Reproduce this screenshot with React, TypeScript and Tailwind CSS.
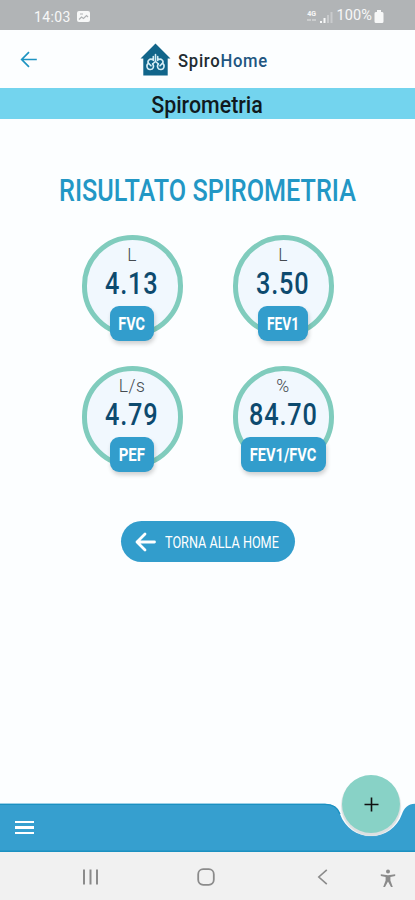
/**
 * SpirometryResult
 *
 * Result screen of a spirometry test, with the four measured values.
 */

import { clsx } from 'clsx';

interface Measurement {
  label: string;
  unit: string;
  value: string;
  badgeClass: string;
  labelClass: string;
}

const measurements: Measurement[] = [
  {
    label: 'FVC',
    unit: 'L',
    value: '4.13',
    badgeClass: 'w-[44px]',
    labelClass: 'scale-x-[0.80]',
  },
  {
    label: 'FEV1',
    unit: 'L',
    value: '3.50',
    badgeClass: 'w-[50px]',
    labelClass: 'scale-x-[0.76]',
  },
  {
    label: 'PEF',
    unit: 'L/s',
    value: '4.79',
    badgeClass: 'w-[44px]',
    labelClass: 'scale-x-[0.83]',
  },
  {
    label: 'FEV1/FVC',
    unit: '%',
    value: '84.70',
    badgeClass: 'w-[85px]',
    labelClass: 'scale-x-[0.81]',
  },
];

function StatusBar() {
  return (
    <div className="flex h-[30px] items-center justify-between bg-[#b1b4b6] pt-[3px] pr-[31px] pl-[34px] text-white/90">
      <div className="flex items-center gap-[6px]">
        <span className="text-[14px] leading-none tracking-[0.4px]">14:03</span>
        <svg className="h-[13px] w-[13px]" viewBox="0 0 13 13" aria-hidden="true">
          <rect x="0" y="1" width="13" height="11" rx="2" fill="currentColor" />
          <path d="M2 9.5L4.5 7l2 1.5L9.5 5.5 11 7M3 4h3" fill="none" stroke="#b1b4b6" strokeWidth="1.2" />
        </svg>
      </div>
      <div className="flex items-center">
        <div className="flex w-[10px] flex-col items-center">
          <span className="text-[7px] leading-[7px] font-bold">4G</span>
          <svg className="h-[4px] w-[9px] opacity-50" viewBox="0 0 9 4" aria-hidden="true">
            <path d="M0 2h4M5 2h4" stroke="currentColor" strokeWidth="1.5" />
          </svg>
        </div>
        <svg className="ml-[3px] h-[12px] w-[13px]" viewBox="0 0 13 12" aria-hidden="true">
          <path d="M1 12v-2M4.5 12V7" stroke="currentColor" strokeWidth="2" />
          <path d="M8 12V4M11.5 12V1" stroke="currentColor" strokeWidth="2" opacity="0.35" />
        </svg>
        <span className="ml-[4px] text-[14.5px] leading-none tracking-[0.1px]">100%</span>
        <svg className="ml-[2px] h-[13px] w-[10px]" viewBox="0 0 10 13" aria-hidden="true">
          <path d="M3 0h4v2h1.2Q9.5 2 9.5 3.5V11.5Q9.5 13 8 13H2Q.5 13 .5 11.5V3.5Q.5 2 1.8 2H3z" fill="currentColor" />
        </svg>
      </div>
    </div>
  );
}

function Logo() {
  return (
    <div className="flex items-center">
      <svg className="h-[33px] w-[31px]" viewBox="0 0 31 33" aria-hidden="true">
        <path d="M15.5 0.5L30.5 15.5H27.7V32.5H3.3V15.5H.5z" fill="#11658a" />
        <g fill="none" stroke="#d5edf5" strokeWidth="1.6" strokeLinecap="round">
          <path d="M15.5 11.5V18.5L12.5 21M15.5 18.5L18.500 21" />
          <path d="M13.3 13.5V17C9.500 14.500 7 18.500 8.500 20.300C5.800 22 6.800 26.800 10.300 26.500C13.300 26.500 14.300 23.500 12.800 21" />
          <path d="M17.700 13.500V17C21.500 14.500 24 18.500 22.500 20.300C25.200 22 24.200 26.800 20.700 26.500C17.700 26.500 16.700 23.500 18.200 21" />
          <path d="M8.500 20.300L11 22.800M22.500 20.300L20 22.800" />
        </g>
      </svg>
      <span className="mt-[4px] ml-[7px] origin-left scale-x-[0.90] text-[18.5px] leading-none font-medium tracking-[0.8px] text-[#222c32]">
        Spiro<span className="text-[#225681]">Home</span>
      </span>
    </div>
  );
}

function Header() {
  return (
    <header className="flex h-[58px] items-center pl-[20px]">
      <button className="h-[18px] w-[18px]" aria-label="Indietro">
        <svg className="h-[18px] w-[18px]" viewBox="0 0 18 18" fill="none" stroke="#1e94c2" strokeWidth="1.7" aria-hidden="true">
          <path d="M16.8 9.5H2M9 2.2L1.7 9.5L9 16.8" />
        </svg>
      </button>
      <div className="ml-[102px]">
        <Logo />
      </div>
    </header>
  );
}

function ResultCircle({ item }: { item: Measurement }) {
  return (
    <div className="flex w-[101px] flex-col items-center">
      <div className="flex h-[102px] w-[101px] flex-col items-center rounded-full border-[5px] border-[#80ccbd] bg-[#f1f8fe] pt-[5px]">
        <span className="text-[17.5px] leading-[20px] font-light tracking-[0.5px] text-[#454b50]">{item.unit}</span>
        <span className="mt-px scale-x-[0.79] text-[32px] leading-[34px] font-medium tracking-[1px] text-[#0d4a6e]">
          {item.value}
        </span>
      </div>
      <div
        className={clsx(
          'relative -mt-[31px] flex h-[35px] items-center justify-center rounded-[9px] bg-[#329dcc] shadow-[1px_3px_4px_rgba(0,0,0,0.18)]',
          item.badgeClass
        )}
      >
        <span className={clsx('text-[18px] leading-none font-bold whitespace-nowrap text-white', item.labelClass)}>
          {item.label}
        </span>
      </div>
    </div>
  );
}

function BottomBar() {
  return (
    <div className="relative h-[49px]">
      <svg className="block h-[49px] w-[415px]" viewBox="0 0 415 49" aria-hidden="true">
        <path
          d="M0 .7H325C334 .7 338 5 340 11C345 25 357 33 371 33C385 33 397 25 402 11C404 5 408 .7 415 .7V49H0z"
          fill="#369fcf"
        />
        <path d="M0 1.4H325C334 1.4 338 5 340 11M0 48.3H415" fill="none" stroke="#1b91c1" strokeWidth="1.4" />
      </svg>
      <button className="absolute top-[18px] left-[15px] flex w-[19px] flex-col gap-[3px]" aria-label="Menu">
        <span className="h-[2.4px] w-full bg-white" />
        <span className="h-[2.4px] w-full bg-white" />
        <span className="h-[2.4px] w-full bg-white" />
      </button>
      <button
        className="absolute -top-[28px] left-[342px] flex h-[58px] w-[58px] items-center justify-center rounded-full bg-[#88d2c6] shadow-[0_2px_1px_1px_#dce0e1]"
        aria-label="Aggiungi"
      >
        <svg className="h-[15px] w-[15px]" viewBox="0 0 15 15" stroke="#111" strokeWidth="1.6" aria-hidden="true">
          <path d="M7.5 .5V14.500M.5 7.500H14.500" />
        </svg>
      </button>
    </div>
  );
}

function SystemNav() {
  return (
    <nav className="flex h-[48px] items-center bg-[#f1f1f1] pt-[2px] pl-[82px] text-[#8b8b8b]">
      <svg className="h-[16px] w-[17px]" viewBox="0 0 17 16" stroke="currentColor" strokeWidth="2" aria-hidden="true">
        <path d="M2 .5V15.5M8.5 .5V15.5M15 .5V15.5" />
      </svg>
      <svg className="ml-[98px] h-[18px] w-[18px]" viewBox="0 0 18 18" fill="none" stroke="currentColor" strokeWidth="1.8" aria-hidden="true">
        <rect x="1.2" y="1.2" width="15.6" height="15.6" rx="5" />
      </svg>
      <svg className="ml-[102px] h-[16px] w-[11px]" viewBox="0 0 11 16" fill="none" stroke="currentColor" strokeWidth="1.6" aria-hidden="true">
        <path d="M9.8 .8L1.8 8L9.8 15.2" />
      </svg>
      <svg className="mt-[2px] ml-[52px] h-[19px] w-[16px]" viewBox="0 0 16 19" fill="currentColor" aria-hidden="true">
        <circle cx="8" cy="2.5" r="2" />
        <path d="M.8 5.3L8 6.2L15.2 5.3V7L10.4 8V11.5L12.8 18H11L8 12.5L5 18H3.2L5.6 11.5V8L.8 7z" />
      </svg>
    </nav>
  );
}

export default function App() {
  return (
    <div className="flex h-[900px] w-[415px] flex-col overflow-hidden bg-[#fcfeff] font-['Roboto','Liberation_Sans',sans-serif]">
      <StatusBar />
      <Header />
      <div className="flex h-[31px] items-center justify-center bg-[#73d4ee] pt-[3px]">
        <h1 className="scale-x-[0.93] text-[23px] leading-none font-medium text-[#10191d]">Spirometria</h1>
      </div>

      <main className="flex flex-1 flex-col items-center">
        <h2 className="mt-[55px] scale-x-[0.80] text-[31.5px] leading-[34px] font-medium whitespace-nowrap text-[#2297c5]">
          RISULTATO SPIROMETRIA
        </h2>
        <div className="mt-[27px] grid grid-cols-[101px_101px] gap-x-[50px] gap-y-[25px]">
          {measurements.map((item) => (
            <ResultCircle key={item.label} item={item} />
          ))}
        </div>
        <button className="mt-[49px] flex h-[41px] w-[174px] items-center rounded-full bg-[#329dcc] pl-[14px] text-white">
          <svg className="h-[20px] w-[21px] shrink-0" viewBox="0 0 21 20" fill="none" stroke="currentColor" strokeWidth="2.8" strokeLinecap="round" strokeLinejoin="round" aria-hidden="true">
            <path d="M19.5 10H2M10 2L2 10L10 18" />
          </svg>
          <span className="mt-[2px] ml-[9px] origin-left scale-x-[0.745] text-[17px] leading-none whitespace-nowrap">
            TORNA ALLA HOME
          </span>
        </button>
      </main>

      <BottomBar />
      <SystemNav />
    </div>
  );
}
